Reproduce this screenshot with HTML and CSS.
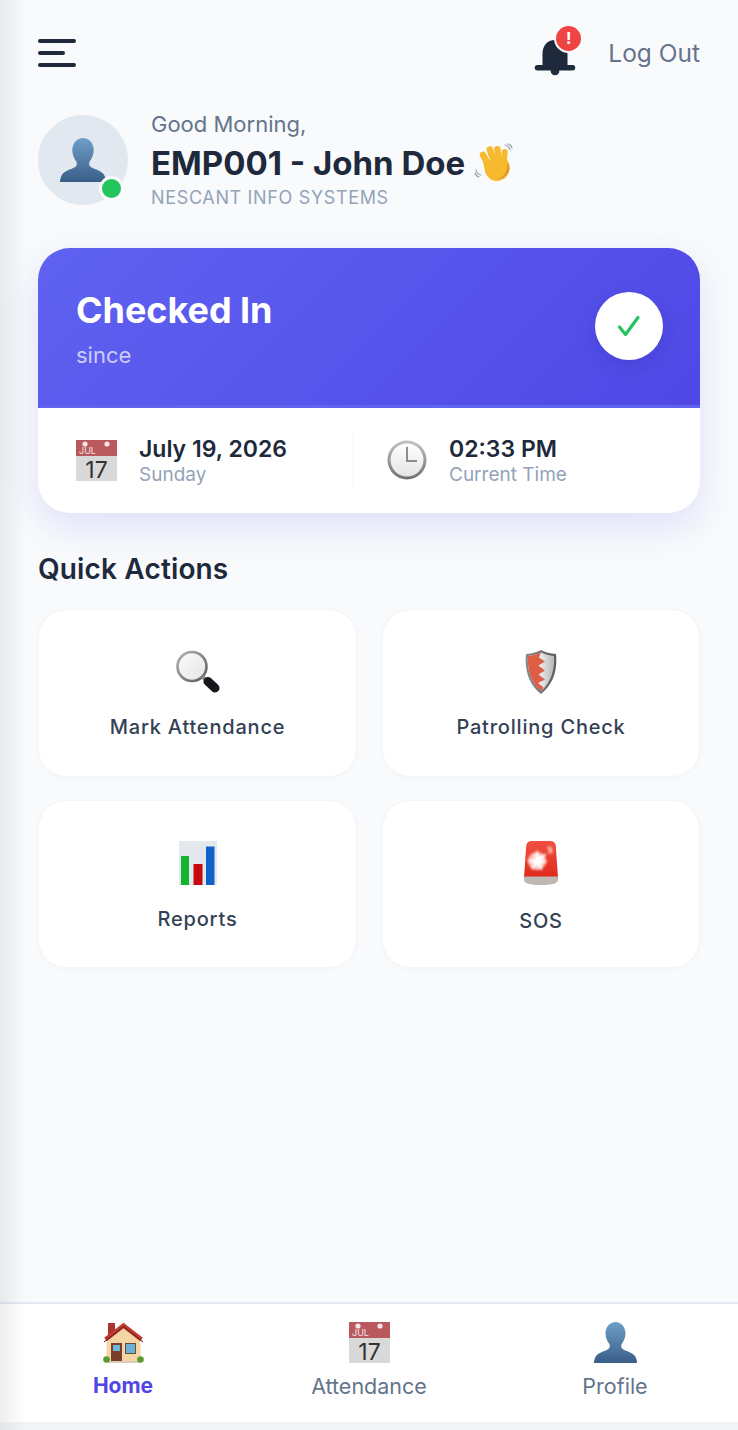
FILE: index.html
```html
<!DOCTYPE html>
<html lang="en">
<head>
<meta charset="utf-8"/>
<meta content="width=device-width, initial-scale=1.0" name="viewport"/>
<title>Home - Nescant</title>
<link rel="stylesheet" href="styles.css">
</head>
<body>
<!-- shared icons -->
<svg class="sprite" aria-hidden="true">
  <defs>
    <linearGradient id="personFill" x1="0" y1="0" x2="0" y2="1">
      <stop offset="0" stop-color="#6f9fc9"/>
      <stop offset="1" stop-color="#395e88"/>
    </linearGradient>
    <linearGradient id="glassFill" x1="0" y1="0" x2="1" y2="1">
      <stop offset="0" stop-color="#fbfbfb"/>
      <stop offset="1" stop-color="#e4e4e4"/>
    </linearGradient>
    <linearGradient id="glassRim" x1="0" y1="0" x2="1" y2="1">
      <stop offset="0" stop-color="#b4b4b4"/>
      <stop offset="1" stop-color="#5a5a5a"/>
    </linearGradient>
    <linearGradient id="clockFace" x1="0" y1="0" x2="0" y2="1">
      <stop offset="0" stop-color="#ffffff"/>
      <stop offset="1" stop-color="#e4e4e4"/>
    </linearGradient>
    <linearGradient id="clockRim" x1="0" y1="0" x2="0" y2="1">
      <stop offset="0" stop-color="#c4c4c4"/>
      <stop offset="1" stop-color="#6f6f6f"/>
    </linearGradient>
    <linearGradient id="sirenFill" x1="0" y1="0" x2="0" y2="1">
      <stop offset="0" stop-color="#f0503f"/>
      <stop offset="1" stop-color="#e0281c"/>
    </linearGradient>
    <linearGradient id="shieldRim" x1="0" y1="0" x2="1" y2="0">
      <stop offset="0" stop-color="#8a8a8a"/>
      <stop offset="1" stop-color="#5c5c5c"/>
    </linearGradient>
    <linearGradient id="shieldSteel" x1="0" y1="0" x2="1" y2="0">
      <stop offset="0.4" stop-color="#f2f2f3"/>
      <stop offset="1" stop-color="#b4b6ba"/>
    </linearGradient>
    <filter id="softBlur" x="-30%" y="-30%" width="160%" height="160%">
      <feGaussianBlur stdDeviation="0.9"/>
    </filter>
    <symbol id="icon-person" viewBox="0 0 43 41">
      <path fill="url(#personFill)" d="M21.500 0C15.800 0 11.500 5 11.500 11.500c0 4.200 1.800 8 3.800 10.400.6.800.7 3.200-.2 4.300C13.600 28.600 4.600 30.200 2 34c-1.300 2-2 5-2 7h43c0-2-.7-5-2-7-2.600-3.800-11.600-5.400-13.100-7.800-.9-1.100-.8-3.500-.2-4.300 2-2.400 3.800-6.200 3.800-10.400C31.500 5 27.200 0 21.500 0z"/>
    </symbol>
    <symbol id="icon-calendar" viewBox="0 0 41 41">
      <rect width="41" height="16" fill="#b9595d"/>
      <rect y="16" width="41" height="25" fill="#d9d9d9"/>
      <circle cx="9" cy="4" r="2.600" fill="#f4e6e6"/>
      <circle cx="31" cy="4" r="2.600" fill="#f4e6e6"/>
      <text class="cal-month" x="3" y="14">JUL</text>
      <text class="cal-day" x="20.500" y="37.500" text-anchor="middle">17</text>
    </symbol>
  </defs>
</svg>

<div class="app">
  <div class="main">
    <!-- top bar -->
    <div class="topbar">
      <div class="burger">
        <span></span>
        <span class="short"></span>
        <span></span>
      </div>
      <div class="topbar-right">
        <div class="bell">
          <svg width="42" height="40" viewBox="0 0 42 40">
            <path fill="#1e293b" d="M21 4C13 4 8.500 10 8.500 18v11H3.500a2.500 2.500 0 0 0 0 5.500h35a2.500 2.500 0 0 0 0-5.500h-5V18C33.500 10 29 4 21 4z"/>
            <circle cx="21" cy="35" r="4.300" fill="#1e293b"/>
          </svg>
          <span class="badge">!</span>
        </div>
        <span class="logout">Log Out</span>
      </div>
    </div>

    <!-- greeting -->
    <div class="greeting">
      <div class="avatar">
        <svg width="46" height="44"><use href="#icon-person"/></svg>
        <span class="online"></span>
      </div>
      <div class="greeting-text">
        <p class="hello">Good Morning,</p>
        <h1 class="emp-name">EMP001 - John Doe
          <svg class="wave" width="40" height="40" viewBox="0 0 40 40">
            <g fill="#f7b92e">
              <rect x="9" y="8" width="6.500" height="21" rx="3.200" transform="rotate(-28 12 18)"/>
              <rect x="15" y="3" width="6.500" height="22" rx="3.200" transform="rotate(-18 18 14)"/>
              <rect x="21" y="3" width="6.500" height="22" rx="3.200" transform="rotate(-6 24 14)"/>
              <rect x="27" y="6" width="6" height="20" rx="3" transform="rotate(6 30 16)"/>
              <path d="M9 19l21-3c4 0 6 5 5.500 10-.5 7-6 12-13 12-6 0-9-4-11-8z"/>
            </g>
            <path fill="#e8982a" d="M33 20c1 6-2 14-10 16 7 0 12-5 12.500-10 .2-2.500-1-5-2.500-6z"/>
            <g fill="none" stroke="#9aa0a6" stroke-width="1.200" stroke-linecap="round">
              <path d="M31 2c2.500.5 4.500 2.500 5 5"/>
              <path d="M34 1c2 .5 3.500 2 4 4"/>
              <path d="M2 27c.5 2.500 2.500 4.500 5 5"/>
              <path d="M1 30c.5 2 2 3.500 4 4"/>
            </g>
          </svg>
        </h1>
        <p class="company">NESCANT INFO SYSTEMS</p>
      </div>
    </div>

    <!-- status card -->
    <div class="status-card">
      <div class="status-top">
        <div class="status-text">
          <h2 class="status-title">Checked In</h2>
          <p class="status-since">since</p>
        </div>
        <div class="status-check">
          <svg width="26" height="26" viewBox="0 0 26 26">
            <path fill="none" stroke="#22c55e" stroke-width="3.200" stroke-linecap="round" stroke-linejoin="round" d="M3.500 14l6 7.500L22 4.500"/>
          </svg>
        </div>
      </div>
      <div class="status-bottom">
        <div class="status-cell cell-date">
          <svg width="41" height="41"><use href="#icon-calendar"/></svg>
          <div>
            <div class="cell-main">July 19, 2026</div>
            <div class="cell-sub">Sunday</div>
          </div>
        </div>
        <div class="status-cell cell-time">
          <svg width="40" height="40" viewBox="0 0 40 40">
            <circle cx="20" cy="20" r="19.500" fill="url(#clockRim)"/>
            <circle cx="20" cy="20" r="16.500" fill="url(#clockFace)"/>
            <path fill="none" stroke="#8d8d8d" stroke-width="2" d="M20 7v14h10"/>
          </svg>
          <div>
            <div class="cell-main">02:33 PM</div>
            <div class="cell-sub">Current Time</div>
          </div>
        </div>
      </div>
    </div>

    <!-- quick actions -->
    <h3 class="section-title">Quick Actions</h3>
    <div class="actions">
      <div class="action">
        <svg width="46" height="44" viewBox="0 0 46 44">
          <circle cx="17" cy="16.500" r="14.500" fill="url(#glassFill)" stroke="url(#glassRim)" stroke-width="2.600"/>
          <path stroke="#8a8a8a" stroke-width="4" d="M27 26.500l4 3.500"/>
          <path stroke="#15151a" stroke-width="9" stroke-linecap="round" d="M33 31.500l7 6.500"/>
        </svg>
        <span class="action-label">Mark Attendance</span>
      </div>
      <div class="action">
        <svg width="32" height="44" viewBox="0 0 32 44">
          <path fill="url(#shieldRim)" d="M16 0c4 2.500 9.500 3.500 15 4 1.500 15-2 30-15 40C3 34-.5 19 1 4c5.500-.5 11-1.500 15-4z"/>
          <path fill="url(#shieldSteel)" d="M16 2.500c3.500 2 8 3 13 3.500 1 12-2.500 26-13 35C5.500 32 2 18 3 6c5-.5 9.500-1.500 13-3.500z"/>
          <path fill="#dd5d45" d="M16 2.500C12.500 4.500 8 5.500 3 6c-1 12 2.500 26 13 35l2.500-3.500-5.500-4.500 7-3.500-6.500-5 6.500-4-6.500-5 6.500-4-6-4z"/>
        </svg>
        <span class="action-label">Patrolling Check</span>
      </div>
      <div class="action action-reports">
        <svg width="38" height="44" viewBox="0 0 38 44">
          <rect width="38" height="44" fill="#e3e7ee"/>
          <rect x="2" y="15" width="8" height="29" fill="#12b52d"/>
          <rect x="14.500" y="23" width="9" height="21" fill="#c50a0e"/>
          <rect x="27" y="5.500" width="8.500" height="38.500" fill="#0f62c8"/>
        </svg>
        <span class="action-label">Reports</span>
      </div>
      <div class="action action-sos">
        <svg width="36" height="44" viewBox="0 0 36 44">
          <path fill="url(#sirenFill)" d="M9 0h18c3.500 0 5.500 1.500 5.800 5L35 37H1L3.200 5C3.500 1.500 5.500 0 9 0z"/>
          <circle cx="14" cy="20" r="9" fill="#ffc9bf" filter="url(#softBlur)"/>
          <path fill="#ffffff" filter="url(#softBlur)" d="M14 8l2 8 8-4-5 7 6 2-7 1 1 8-5-6-6 5 3-7-7-2 8-2z"/>
          <path fill="#f9a79b" filter="url(#softBlur)" d="M24 5l5 1 1 6-4 1z"/>
          <path fill="#bdb8b1" d="M1 37c0-.8.5-1.500 1.500-1.500h31c1 0 1.500.7 1.500 1.500v2c0 3-5 5-17 5S1 42 1 39z"/>
        </svg>
        <span class="action-label">SOS</span>
      </div>
    </div>
  </div>

  <!-- bottom nav -->
  <div class="bottom-nav">
    <div class="nav-item active">
      <svg width="41" height="41" viewBox="0 0 41 41">
        <rect x="5" y="1" width="7" height="13" fill="#a9352c"/>
        <path fill="#f4d6a5" d="M3.500 18L20.500 4l17 14v21h-34z"/>
        <path fill="none" stroke="#c23a30" stroke-width="4.500" d="M2.500 17.500L20.500 3.500l18 14"/>
        <path fill="none" stroke="#4b1d1a" stroke-width="1" d="M1 20L20.500 4.500 40 20"/>
        <rect x="8" y="21" width="11" height="18" fill="#7a3e2a"/>
        <rect x="10" y="23" width="7" height="6" fill="#6fb6e0"/>
        <rect x="22" y="21" width="11" height="11" fill="#6b4a38"/>
        <rect x="23" y="22" width="9" height="9" fill="#6fb0da"/>
        <rect x="3.500" y="39" width="34" height="2" fill="#d8cdb8"/>
        <circle cx="3.500" cy="37.500" r="3.300" fill="#5c9a2f"/>
        <circle cx="37.500" cy="37.500" r="3.300" fill="#5c9a2f"/>
      </svg>
      <span class="nav-label">Home</span>
    </div>
    <div class="nav-item">
      <svg width="41" height="41"><use href="#icon-calendar"/></svg>
      <span class="nav-label">Attendance</span>
    </div>
    <div class="nav-item">
      <svg width="43" height="41"><use href="#icon-person"/></svg>
      <span class="nav-label">Profile</span>
    </div>
  </div>
  <div class="bottom-strip"></div>
  <div class="edge-shade"></div>
</div>
</body>
</html>
```
FILE: styles.css
```css
:root {
  --color-fondo: #f8fafc;
  --color-oscuro: #1e293b;
  --color-medio: #64748b;
  --color-suave: #94a3b8;
  --color-indigo: #4f46e5;
}

* {
  box-sizing: border-box;
  font-family: 'Inter', sans-serif;
}

html, body {
  margin: 0;
  padding: 0;
}

body {
  background: var(--color-fondo);
  overflow: hidden;
}

h1, h2, h3, p {
  margin: 0;
}

.sprite {
  position: absolute;
  width: 0;
  height: 0;
}

.cal-month {
  font-family: 'Inter', sans-serif;
  font-size: 9px;
  fill: #f3e3e3;
}

.cal-day {
  font-family: 'Inter', sans-serif;
  font-size: 23px;
  fill: #333;
}

.app {
  position: relative;
  display: flex;
  flex-direction: column;
  height: 1430px;
  overflow: hidden;
}

.main {
  flex: 1;
  padding: 0 38px;
}

.edge-shade {
  position: absolute;
  top: 0;
  left: 0;
  bottom: 0;
  width: 26px;
  background: linear-gradient(to right, rgba(15, 23, 42, 0.07), rgba(15, 23, 42, 0));
  pointer-events: none;
}

/* top bar */
.topbar {
  display: flex;
  justify-content: space-between;
  align-items: center;
  height: 106px;
}

.burger {
  display: flex;
  flex-direction: column;
  gap: 8px;
}

.burger span {
  display: block;
  width: 38px;
  height: 4px;
  border-radius: 2px;
  background: var(--color-oscuro);
}

.burger span.short {
  width: 27px;
}

.topbar-right {
  display: flex;
  align-items: center;
  gap: 32px;
}

.bell {
  position: relative;
  width: 42px;
  height: 40px;
  margin-top: 5px;
}

.bell svg {
  display: block;
}

.badge {
  position: absolute;
  top: -12px;
  right: -7px;
  width: 29px;
  height: 29px;
  border: 2px solid #f8fafc;
  border-radius: 50%;
  background: #ef4444;
  color: white;
  font-size: 16px;
  font-weight: 700;
  line-height: 25px;
  text-align: center;
}

.logout {
  color: var(--color-medio);
  font-size: 24.5px;
}

/* greeting */
.greeting {
  display: flex;
  align-items: center;
  gap: 23px;
  margin-top: 9px;
  height: 90px;
}

.avatar {
  position: relative;
  display: flex;
  align-items: center;
  justify-content: center;
  flex: none;
  width: 90px;
  height: 90px;
  border-radius: 50%;
  background: #e2e8f0;
}

.online {
  position: absolute;
  right: 4px;
  bottom: 4px;
  width: 25px;
  height: 25px;
  border: 3px solid #f8fafc;
  border-radius: 50%;
  background: #22c55e;
}

.hello {
  color: var(--color-medio);
  font-size: 22px;
  line-height: 28px;
}

.emp-name {
  display: flex;
  align-items: center;
  gap: 9px;
  margin-top: 4px;
  color: var(--color-oscuro);
  font-size: 33px;
  font-weight: 700;
  line-height: 42px;
}

.company {
  margin-top: 2px;
  color: var(--color-suave);
  font-size: 18px;
  line-height: 24px;
  letter-spacing: 0.65px;
}

/* status card */
.status-card {
  margin-top: 43px;
  height: 265px;
  border-radius: 32px;
  background: white;
  box-shadow: 0 14px 36px rgba(79, 70, 229, 0.14);
  overflow: hidden;
}

.status-top {
  display: flex;
  justify-content: space-between;
  align-items: center;
  height: 160px;
  padding: 0 37px 0 38px;
  border-bottom: 3px solid #5f63ee;
  background: linear-gradient(135deg, #5f62f0, #4f48e6);
}

.status-text {
  padding-top: 4px;
}

.status-title {
  color: white;
  font-size: 36px;
  font-weight: 700;
  line-height: 44px;
  letter-spacing: -0.05px;
}

.status-since {
  margin-top: 9px;
  color: rgba(255, 255, 255, 0.7);
  font-size: 22px;
  line-height: 28px;
}

.status-check {
  display: flex;
  align-items: center;
  justify-content: center;
  width: 68px;
  height: 68px;
  margin-top: -2px;
  border-radius: 50%;
  background: white;
  box-shadow: 0 6px 16px rgba(30, 27, 120, 0.15);
}

.status-bottom {
  display: grid;
  grid-template-columns: 316px 1fr;
  padding-top: 26px;
}

.status-cell {
  display: flex;
  align-items: center;
  height: 52px;
}

.cell-date {
  gap: 22px;
  padding-left: 38px;
  border-right: 1px solid #f1f5f9;
}

.cell-time {
  gap: 22px;
  padding-left: 33px;
}

.cell-main {
  color: var(--color-oscuro);
  font-size: 23px;
  font-weight: 600;
  line-height: 30px;
}

.cell-sub {
  color: var(--color-suave);
  font-size: 19px;
  line-height: 22px;
}

/* quick actions */
.section-title {
  margin-top: 38px;
  color: var(--color-oscuro);
  font-size: 28px;
  font-weight: 600;
  line-height: 36px;
  letter-spacing: 0.15px;
}

.actions {
  display: grid;
  grid-template-columns: 319px 318px;
  gap: 23px 25px;
  margin-top: 22px;
}

.action {
  display: flex;
  flex-direction: column;
  align-items: center;
  height: 168px;
  padding-top: 40px;
  border: 1px solid #f1f5f9;
  border-radius: 28px;
  background: white;
  box-shadow: 0 2px 6px rgba(15, 23, 42, 0.02);
}

.action-label {
  margin-top: 20px;
  color: #334155;
  font-size: 20px;
  font-weight: 500;
  line-height: 26px;
  letter-spacing: 0.8px;
}

.action-reports .action-label {
  margin-top: 21px;
}

.action-sos .action-label {
  margin-top: 23px;
}

/* bottom nav */
.bottom-nav {
  display: grid;
  grid-template-columns: repeat(3, 1fr);
  height: 120px;
  border-top: 2px solid #e2e8f0;
  background: white;
}

.nav-item {
  display: flex;
  flex-direction: column;
  align-items: center;
  padding-top: 18px;
}

.nav-label {
  margin-top: 9px;
  color: var(--color-medio);
  font-size: 21.5px;
  line-height: 28px;
}

.nav-item.active .nav-label {
  color: var(--color-indigo);
  font-size: 21px;
  font-weight: 700;
}

.bottom-strip {
  height: 8px;
  background: #f3f4f6;
}
```
